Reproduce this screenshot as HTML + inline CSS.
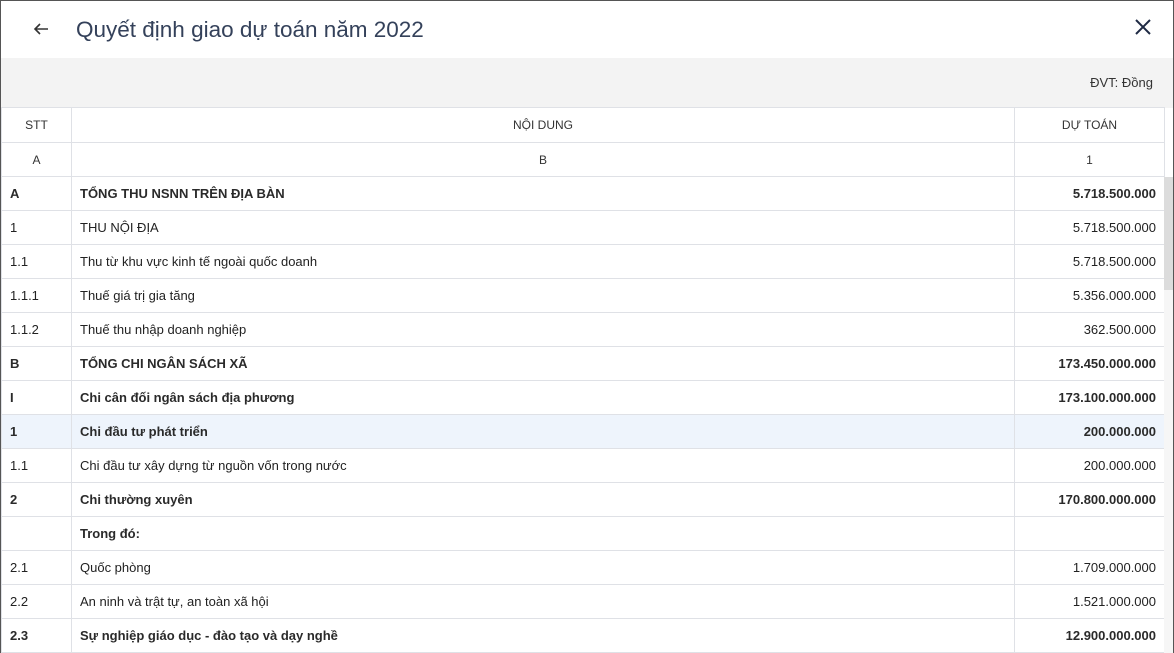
<!DOCTYPE html>
<html><head><meta charset="utf-8"><style>
*{margin:0;padding:0;box-sizing:border-box}
body{width:1174px;height:653px;overflow:hidden;background:#fff;font-family:"Liberation Sans",Arial,sans-serif;color:#222;position:relative}
.frame{position:absolute;left:0;top:0;width:1174px;height:653px;border:1px solid #555;border-bottom:none;pointer-events:none;z-index:5}
.hdr{position:absolute;left:0;top:0;width:1174px;height:58px;background:#fff}
.title{position:absolute;left:76px;top:17px;font-size:22.5px;color:#34415a}
.back{position:absolute;left:32px;top:20px}
.close{position:absolute;left:1134px;top:18px}
.bar{position:absolute;left:0;top:58px;width:1174px;height:50px;background:#f3f3f3}
.dvt{position:absolute;right:21px;top:75px;font-size:13px;color:#333}
table{position:absolute;left:1px;top:107px;width:1163px;border-collapse:collapse;font-size:13px;table-layout:fixed}
td{border:1px solid #dfe1e6;height:34px;padding:0 8px;white-space:nowrap;color:#222}
tr.h td{text-align:center;font-size:12px;color:#333;height:34px}
tr.h1 td{height:35px}
td.r{text-align:right}
tr.b td{font-weight:bold;color:#2a2a2a}
tr.hl td{background:#eef4fc}
.sb{position:absolute;left:1164px;top:177px;width:10px;height:476px;background:#f6f6f6}
.th{position:absolute;left:1164px;top:177px;width:10px;height:113px;background:#dcdcdc}
</style></head><body>
<div class="hdr">
<svg class="back" width="18" height="18" viewBox="0 0 18 18"><path d="M16 9H3M8 4L3 9l5 5" fill="none" stroke="#333" stroke-width="1.6"/></svg>
<div class="title">Quyết định giao dự toán năm 2022</div>
<svg class="close" width="18" height="18" viewBox="0 0 18 18"><path d="M2 2L16 16M16 2L2 16" stroke="#1f2a44" stroke-width="2"/></svg>
</div>
<div class="bar"></div>
<div class="dvt">ĐVT: Đồng</div>
<table>
<colgroup><col style="width:70px"><col style="width:943px"><col style="width:150px"></colgroup>
<tr class="h h1"><td>STT</td><td>NỘI DUNG</td><td>DỰ TOÁN</td></tr>
<tr class="h"><td>A</td><td>B</td><td>1</td></tr>
<tr class="b"><td>A</td><td>TỔNG THU NSNN TRÊN ĐỊA BÀN</td><td class="r">5.718.500.000</td></tr>
<tr><td>1</td><td>THU NỘI ĐỊA</td><td class="r">5.718.500.000</td></tr>
<tr><td>1.1</td><td>Thu từ khu vực kinh tế ngoài quốc doanh</td><td class="r">5.718.500.000</td></tr>
<tr><td>1.1.1</td><td>Thuế giá trị gia tăng</td><td class="r">5.356.000.000</td></tr>
<tr><td>1.1.2</td><td>Thuế thu nhập doanh nghiệp</td><td class="r">362.500.000</td></tr>
<tr class="b"><td>B</td><td>TỔNG CHI NGÂN SÁCH XÃ</td><td class="r">173.450.000.000</td></tr>
<tr class="b"><td>I</td><td>Chi cân đối ngân sách địa phương</td><td class="r">173.100.000.000</td></tr>
<tr class="b hl"><td>1</td><td>Chi đầu tư phát triển</td><td class="r">200.000.000</td></tr>
<tr><td>1.1</td><td>Chi đầu tư xây dựng từ nguồn vốn trong nước</td><td class="r">200.000.000</td></tr>
<tr class="b"><td>2</td><td>Chi thường xuyên</td><td class="r">170.800.000.000</td></tr>
<tr class="b"><td></td><td>Trong đó:</td><td class="r"></td></tr>
<tr><td>2.1</td><td>Quốc phòng</td><td class="r">1.709.000.000</td></tr>
<tr><td>2.2</td><td>An ninh và trật tự, an toàn xã hội</td><td class="r">1.521.000.000</td></tr>
<tr class="b"><td>2.3</td><td>Sự nghiệp giáo dục - đào tạo và dạy nghề</td><td class="r">12.900.000.000</td></tr>
</table>
<div class="sb"></div><div class="th"></div>
<div class="frame"></div>
</body></html>
